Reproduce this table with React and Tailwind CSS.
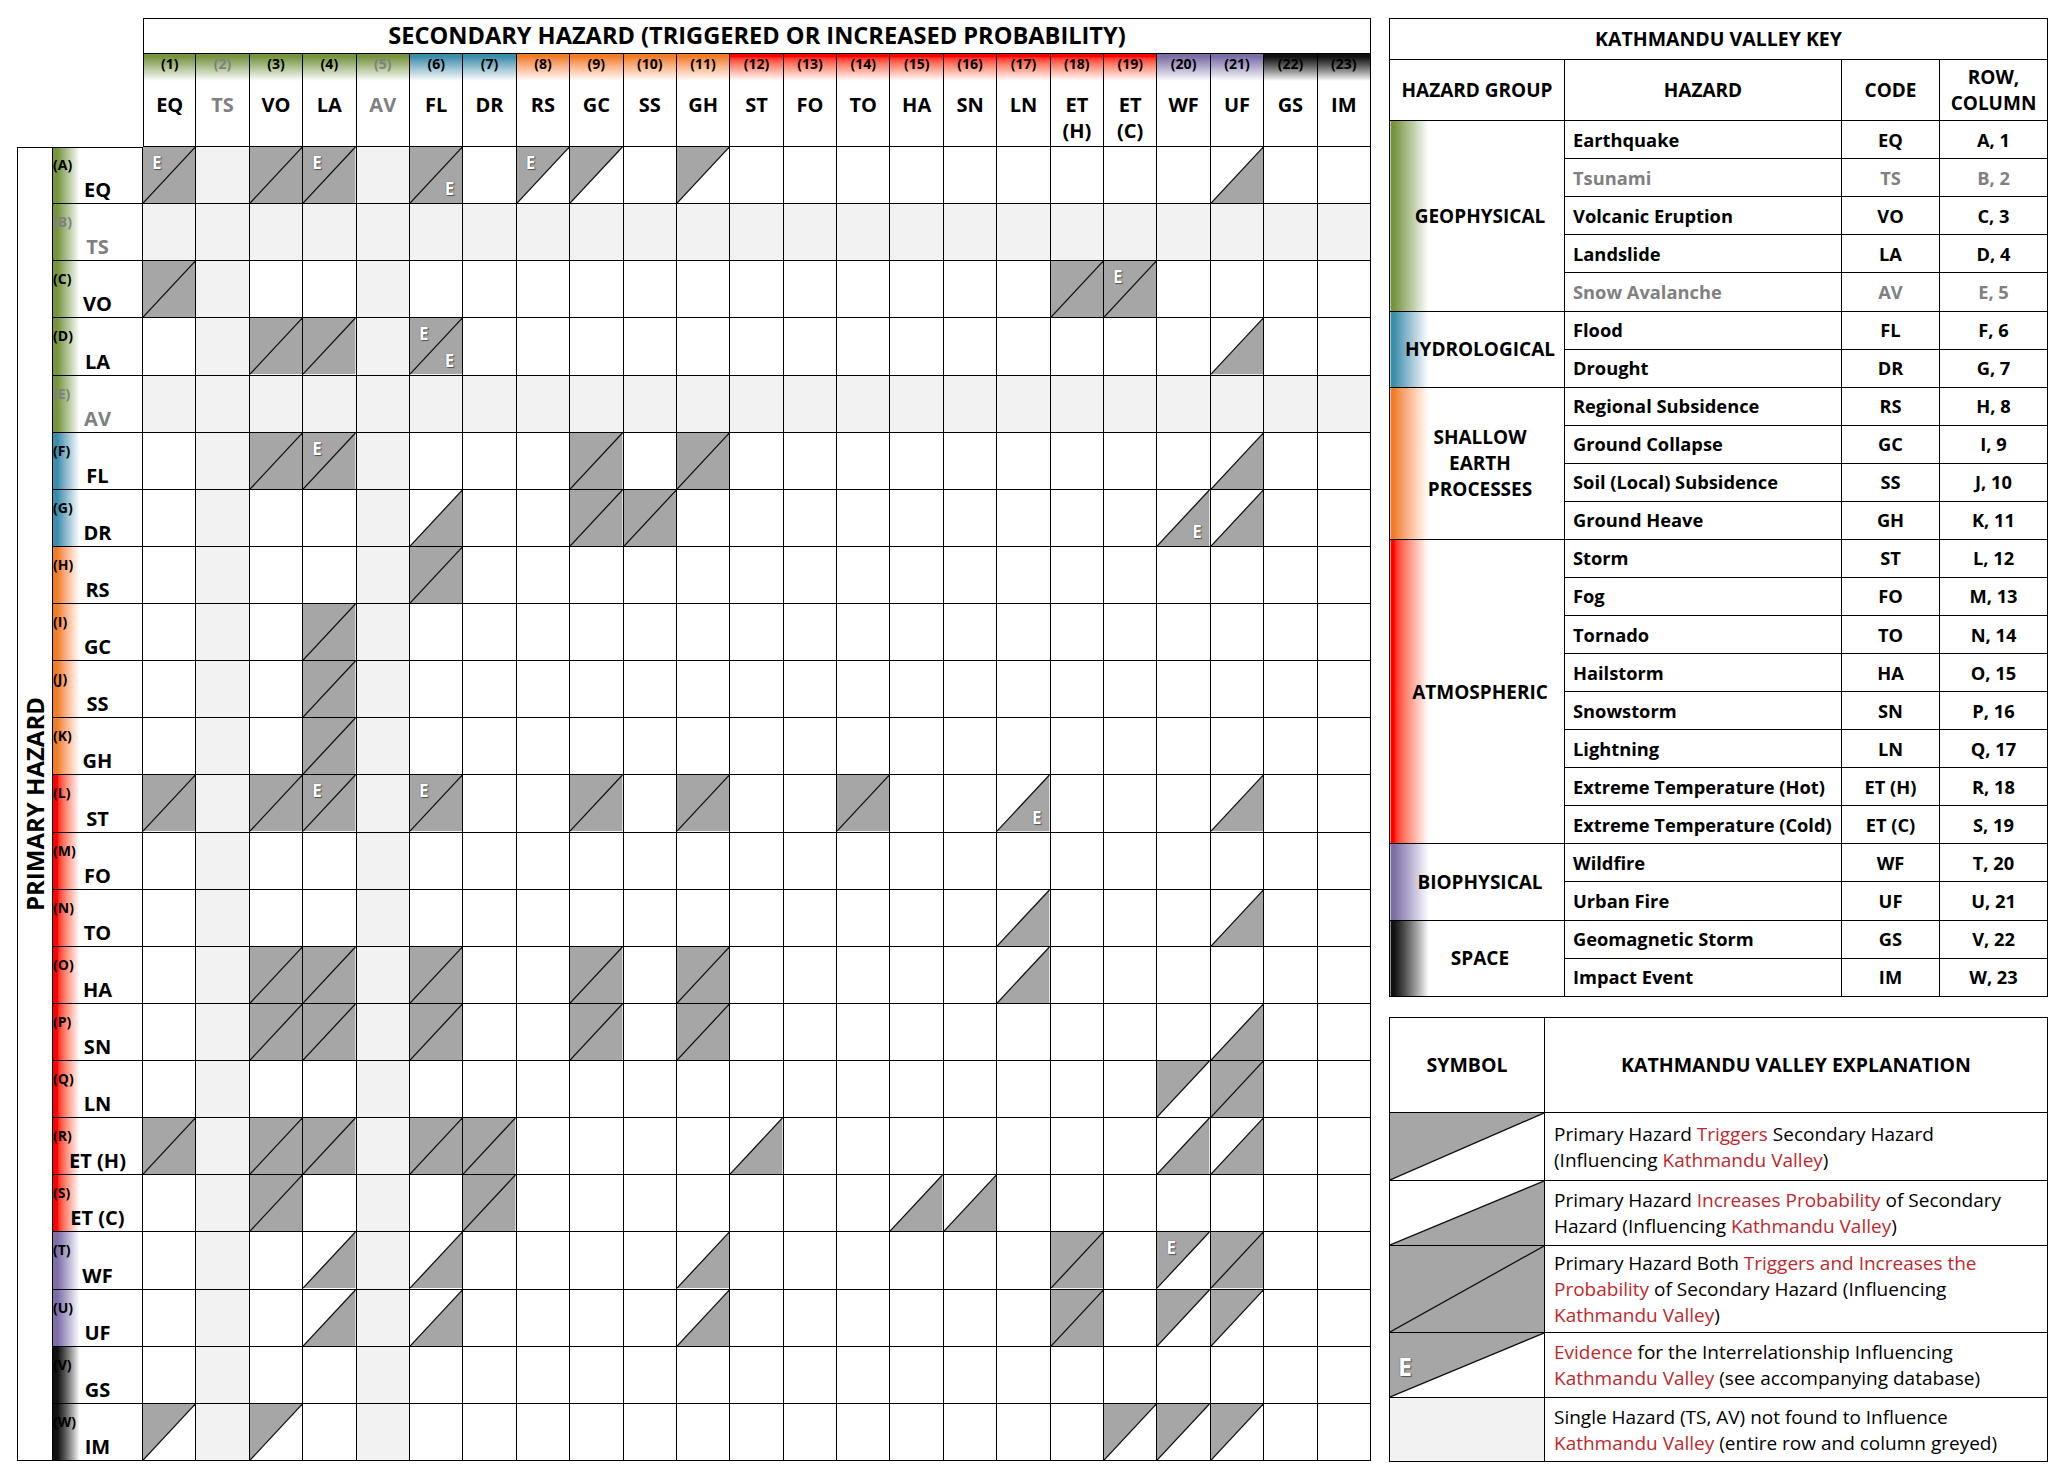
import React from 'react';

// colour bands per hazard group
const GROUP = {
  geo: {
    col: 'bg-linear-to-b from-[#77933c] from-10% to-white to-100%',
    row: 'bg-linear-to-r from-[#77933c] from-5% to-white to-30%',
    key: 'bg-linear-to-r from-[#77933c] from-2% to-white to-22%',
  },
  hyd: {
    col: 'bg-linear-to-b from-[#3a8dab] from-10% to-white to-100%',
    row: 'bg-linear-to-r from-[#3a8dab] from-5% to-white to-30%',
    key: 'bg-linear-to-r from-[#3a8dab] from-2% to-white to-22%',
  },
  sha: {
    col: 'bg-linear-to-b from-[#f07d24] from-10% to-white to-100%',
    row: 'bg-linear-to-r from-[#f07d24] from-5% to-white to-30%',
    key: 'bg-linear-to-r from-[#f07d24] from-2% to-white to-22%',
  },
  atm: {
    col: 'bg-linear-to-b from-[#ff0000] from-10% to-white to-100%',
    row: 'bg-linear-to-r from-[#ff0000] from-5% to-white to-30%',
    key: 'bg-linear-to-r from-[#ff0000] from-2% to-white to-22%',
  },
  bio: {
    col: 'bg-linear-to-b from-[#7d6ea6] from-10% to-white to-100%',
    row: 'bg-linear-to-r from-[#7d6ea6] from-5% to-white to-30%',
    key: 'bg-linear-to-r from-[#7d6ea6] from-2% to-white to-22%',
  },
  spa: {
    col: 'bg-linear-to-b from-[#111111] from-10% to-white to-100%',
    row: 'bg-linear-to-r from-[#111111] from-5% to-white to-30%',
    key: 'bg-linear-to-r from-[#111111] from-2% to-white to-22%',
  },
};

const COLS = [
  { code: 'EQ', g: 'geo' },
  { code: 'TS', g: 'geo', grey: true },
  { code: 'VO', g: 'geo' },
  { code: 'LA', g: 'geo' },
  { code: 'AV', g: 'geo', grey: true },
  { code: 'FL', g: 'hyd' },
  { code: 'DR', g: 'hyd' },
  { code: 'RS', g: 'sha' },
  { code: 'GC', g: 'sha' },
  { code: 'SS', g: 'sha' },
  { code: 'GH', g: 'sha' },
  { code: 'ST', g: 'atm' },
  { code: 'FO', g: 'atm' },
  { code: 'TO', g: 'atm' },
  { code: 'HA', g: 'atm' },
  { code: 'SN', g: 'atm' },
  { code: 'LN', g: 'atm' },
  { code: 'ET', code2: '(H)', g: 'atm' },
  { code: 'ET', code2: '(C)', g: 'atm' },
  { code: 'WF', g: 'bio' },
  { code: 'UF', g: 'bio' },
  { code: 'GS', g: 'spa' },
  { code: 'IM', g: 'spa' },
];

// T = triggers, P = increases probability, B = both; 1 = E top-left, 2 = E bottom-right, 3 = both
const MATRIX = {
  A: { 1: 'B1', 3: 'B', 4: 'B1', 6: 'B2', 8: 'T1', 9: 'T', 11: 'T', 21: 'P' },
  B: {},
  C: { 1: 'B', 18: 'B', 19: 'B1' },
  D: { 3: 'B', 4: 'B', 6: 'B3', 21: 'P' },
  E: {},
  F: { 3: 'B', 4: 'B1', 9: 'B', 11: 'B', 21: 'P' },
  G: { 6: 'P', 9: 'B', 10: 'B', 20: 'P2', 21: 'P' },
  H: { 6: 'B' },
  I: { 4: 'B' },
  J: { 4: 'B' },
  K: { 4: 'B' },
  L: { 1: 'B', 3: 'B', 4: 'B1', 6: 'B1', 9: 'B', 11: 'B', 14: 'B', 17: 'P2', 21: 'P' },
  M: {},
  N: { 17: 'P', 21: 'P' },
  O: { 3: 'B', 4: 'B', 6: 'B', 9: 'B', 11: 'B', 17: 'P' },
  P: { 3: 'B', 4: 'B', 6: 'B', 9: 'B', 11: 'B', 21: 'P' },
  Q: { 20: 'T', 21: 'B' },
  R: { 1: 'B', 3: 'B', 4: 'B', 6: 'B', 7: 'B', 12: 'P', 20: 'P', 21: 'P' },
  S: { 3: 'B', 7: 'B', 15: 'P', 16: 'P' },
  T: { 4: 'P', 6: 'P', 11: 'P', 18: 'B', 20: 'T1', 21: 'B' },
  U: { 4: 'P', 6: 'P', 11: 'P', 18: 'B', 20: 'T', 21: 'T' },
  V: {},
  W: { 1: 'T', 3: 'T', 19: 'T', 20: 'T', 21: 'T' },
};

const ROWS = 'ABCDEFGHIJKLMNOPQRSTUVW'.split('').map((letter, i) => ({
  letter,
  ...COLS[i],
  grey: letter === 'B' || letter === 'E',
}));

const KEY = [
  { g: 'geo', name: ['GEOPHYSICAL'], items: [
    ['Earthquake', 'EQ', 'A, 1'], ['Tsunami', 'TS', 'B, 2', true], ['Volcanic Eruption', 'VO', 'C, 3'],
    ['Landslide', 'LA', 'D, 4'], ['Snow Avalanche', 'AV', 'E, 5', true]] },
  { g: 'hyd', name: ['HYDROLOGICAL'], items: [['Flood', 'FL', 'F, 6'], ['Drought', 'DR', 'G, 7']] },
  { g: 'sha', name: ['SHALLOW', 'EARTH', 'PROCESSES'], items: [
    ['Regional Subsidence', 'RS', 'H, 8'], ['Ground Collapse', 'GC', 'I, 9'],
    ['Soil (Local) Subsidence', 'SS', 'J, 10'], ['Ground Heave', 'GH', 'K, 11']] },
  { g: 'atm', name: ['ATMOSPHERIC'], items: [
    ['Storm', 'ST', 'L, 12'], ['Fog', 'FO', 'M, 13'], ['Tornado', 'TO', 'N, 14'], ['Hailstorm', 'HA', 'O, 15'],
    ['Snowstorm', 'SN', 'P, 16'], ['Lightning', 'LN', 'Q, 17'], ['Extreme Temperature (Hot)', 'ET (H)', 'R, 18'],
    ['Extreme Temperature (Cold)', 'ET (C)', 'S, 19']] },
  { g: 'bio', name: ['BIOPHYSICAL'], items: [['Wildfire', 'WF', 'T, 20'], ['Urban Fire', 'UF', 'U, 21']] },
  { g: 'spa', name: ['SPACE'], items: [['Geomagnetic Storm', 'GS', 'V, 22'], ['Impact Event', 'IM', 'W, 23']] },
];

const E_STYLE = 'font-bold text-white leading-none [text-shadow:0_0_1px_#444,1px_1px_1px_#555]';

function Tri({ type }) {
  return (
    <svg viewBox="0 0 100 100" preserveAspectRatio="none" className="absolute inset-0 h-full w-full">
      {type === 'T' && <polygon points="0,0 100,0 0,100" fill="#a6a6a6" />}
      {type === 'P' && <polygon points="100,0 100,100 0,100" fill="#a6a6a6" />}
      {type === 'B' && <rect width="100" height="100" fill="#a6a6a6" />}
      <line x1="0" y1="100" x2="100" y2="0" stroke="#111" strokeWidth="1.3" vectorEffect="non-scaling-stroke" />
    </svg>
  );
}

function Cell({ v, grey }) {
  if (grey) return <div className="border-r border-b border-black bg-[#f2f2f2]" />;
  const type = v ? v[0] : null;
  const e = v ? v[1] : null;
  return (
    <div className="relative border-r border-b border-black bg-white">
      {type && <Tri type={type} />}
      {(e === '1' || e === '3') && <span className={`absolute left-[9px] top-[7px] text-[17px] ${E_STYLE}`}>E</span>}
      {(e === '2' || e === '3') && <span className={`absolute right-[8px] bottom-[6px] text-[17px] ${E_STYLE}`}>E</span>}
    </div>
  );
}

function Matrix() {
  return (
    <div className="grid h-[1443px] w-[1354px] shrink-0 grid-cols-[36px_90px_repeat(23,minmax(0,1fr))] grid-rows-[36px_93px_repeat(23,minmax(0,1fr))]">
      <div className="col-span-2 row-span-2" />
      <div className="col-span-23 flex items-center justify-center border border-black text-[23.6px] font-bold">
        SECONDARY HAZARD (TRIGGERED OR INCREASED PROBABILITY)
      </div>
      {COLS.map((c, i) => (
        <div key={i} className={`flex flex-col border-r border-b border-black ${i === 0 ? 'border-l' : ''} ${c.grey ? 'text-[#808080]' : ''}`}>
          <div className={`h-[27px] pt-[3px] text-center text-[14px] font-bold leading-none ${GROUP[c.g].col}`}>({i + 1})</div>
          <div className="flex flex-col items-center pt-[11px] text-[20px] font-bold leading-[26px]">
            <span>{c.code}</span>
            {c.code2 && <span>{c.code2}</span>}
          </div>
        </div>
      ))}
      <div className="row-span-23 flex items-center justify-center border border-black">
        <span className="-rotate-90 whitespace-nowrap text-[24px] font-bold">PRIMARY HAZARD</span>
      </div>
      {ROWS.map((r, ri) => (
        <React.Fragment key={r.letter}>
          <div className={`flex flex-col justify-between border-r border-b border-black ${ri === 0 ? 'border-t' : ''} ${GROUP[r.g].row} ${r.grey ? 'text-[#808080]' : ''}`}>
            <span className={`${ri === 0 ? 'pt-[10px]' : 'pt-[11px]'} text-[14px] font-bold leading-none`}>({r.letter})</span>
            <span className="text-center text-[20px] font-bold leading-[26px]">{r.code2 ? `${r.code} ${r.code2}` : r.code}</span>
          </div>
          {COLS.map((c, ci) => (
            <Cell key={ci} v={MATRIX[r.letter][ci + 1]} grey={r.grey || c.grey} />
          ))}
        </React.Fragment>
      ))}
    </div>
  );
}

function KeyTable() {
  return (
    <table className="h-[979px] w-[659px] table-fixed border-collapse text-[18.3px] font-bold">
      <colgroup>
        <col className="w-[175px]" />
        <col className="w-[277px]" />
        <col className="w-[98px]" />
        <col />
      </colgroup>
      <tbody>
        <tr className="h-[41px] text-[19.5px]">
          <td colSpan={4} className="border border-black text-center">KATHMANDU VALLEY KEY</td>
        </tr>
        <tr className="h-[61px] text-[19px]">
          <td className="border border-black text-center">HAZARD GROUP</td>
          <td className="border border-black text-center">HAZARD</td>
          <td className="border border-black text-center">CODE</td>
          <td className="border border-black text-center leading-[26px]">ROW,<br />COLUMN</td>
        </tr>
        {KEY.map((grp) =>
          grp.items.map((it, i) => (
            <tr key={it[1]} className={`h-[38px] ${it[3] ? 'text-[#808080]' : ''}`}>
              {i === 0 && (
                <td rowSpan={grp.items.length} className={`border border-black pl-[6px] text-center text-[19px] leading-[26px] text-black ${GROUP[grp.g].key}`}>
                  {grp.name.map((n) => <div key={n}>{n}</div>)}
                </td>
              )}
              <td className="border border-black pl-[8px] leading-[22px]">{it[0]}</td>
              <td className="border border-black text-center leading-[22px]">{it[1]}</td>
              <td className="border border-black text-center leading-[22px]">{it[2]}</td>
            </tr>
          ))
        )}
      </tbody>
    </table>
  );
}

const R = ({ children }) => <span className="text-[#c0282d]">{children}</span>;

function Symbol({ type, e }) {
  return (
    <div className="relative h-full w-full">
      {type === 'G' ? (
        <div className="absolute inset-0 bg-[#f2f2f2]" />
      ) : (
        <svg viewBox="0 0 100 100" preserveAspectRatio="none" className="absolute inset-0 h-full w-full">
          {type === 'T' && <polygon points="0,0 100,0 0,100" fill="#a6a6a6" />}
          {type === 'P' && <polygon points="100,0 100,100 0,100" fill="#a6a6a6" />}
          {type === 'B' && <rect width="100" height="100" fill="#a6a6a6" />}
          <line x1="0" y1="100" x2="100" y2="0" stroke="#111" strokeWidth="1.3" vectorEffect="non-scaling-stroke" />
        </svg>
      )}
      {e && <span className={`absolute left-[8px] top-[21px] text-[25px] ${E_STYLE}`}>E</span>}
    </div>
  );
}

function Explanation() {
  const rows = [
    { h: 'h-[68px]', sym: <Symbol type="T" />, text: <>Primary Hazard <R>Triggers</R> Secondary Hazard<br />(Influencing <R>Kathmandu Valley</R>)</> },
    { h: 'h-[65px]', sym: <Symbol type="P" />, text: <>Primary Hazard <R>Increases Probability</R> of Secondary Hazard (Influencing <R>Kathmandu Valley</R>)</> },
    { h: 'h-[87px]', sym: <Symbol type="B" />, text: <>Primary Hazard Both <R>Triggers and Increases the Probability</R> of Secondary Hazard (Influencing <R>Kathmandu Valley</R>)</> },
    { h: 'h-[65px]', sym: <Symbol type="T" e />, text: <><R>Evidence</R> for the Interrelationship Influencing <R>Kathmandu Valley</R> (see accompanying database)</> },
    { h: 'h-[64px]', sym: <Symbol type="G" />, text: <>Single Hazard (TS, AV) not found to Influence <R>Kathmandu Valley</R> (entire row and column greyed)</> },
  ];
  return (
    <table className="h-[444px] w-[659px] table-fixed border-collapse text-[19px]">
      <colgroup>
        <col className="w-[155px]" />
        <col />
      </colgroup>
      <tbody>
        <tr className="h-[95px] text-[19.5px] font-bold">
          <td className="border border-black text-center">SYMBOL</td>
          <td className="border border-black text-center">KATHMANDU VALLEY EXPLANATION</td>
        </tr>
        {rows.map((r, i) => (
          <tr key={i} className={r.h}>
            <td className="border border-black p-0">{r.sym}</td>
            <td className="border border-black pl-[9px] pr-[6px] leading-[26px]">{r.text}</td>
          </tr>
        ))}
      </tbody>
    </table>
  );
}

export default function App() {
  return (
    <div className="flex h-[1479px] w-[2067px] gap-[18px] bg-white pl-[17px] pt-[18px] text-black [font-family:'Open_Sans',sans-serif]">
      <Matrix />
      <div className="flex w-[659px] flex-col gap-[20px]">
        <KeyTable />
        <Explanation />
      </div>
    </div>
  );
}
